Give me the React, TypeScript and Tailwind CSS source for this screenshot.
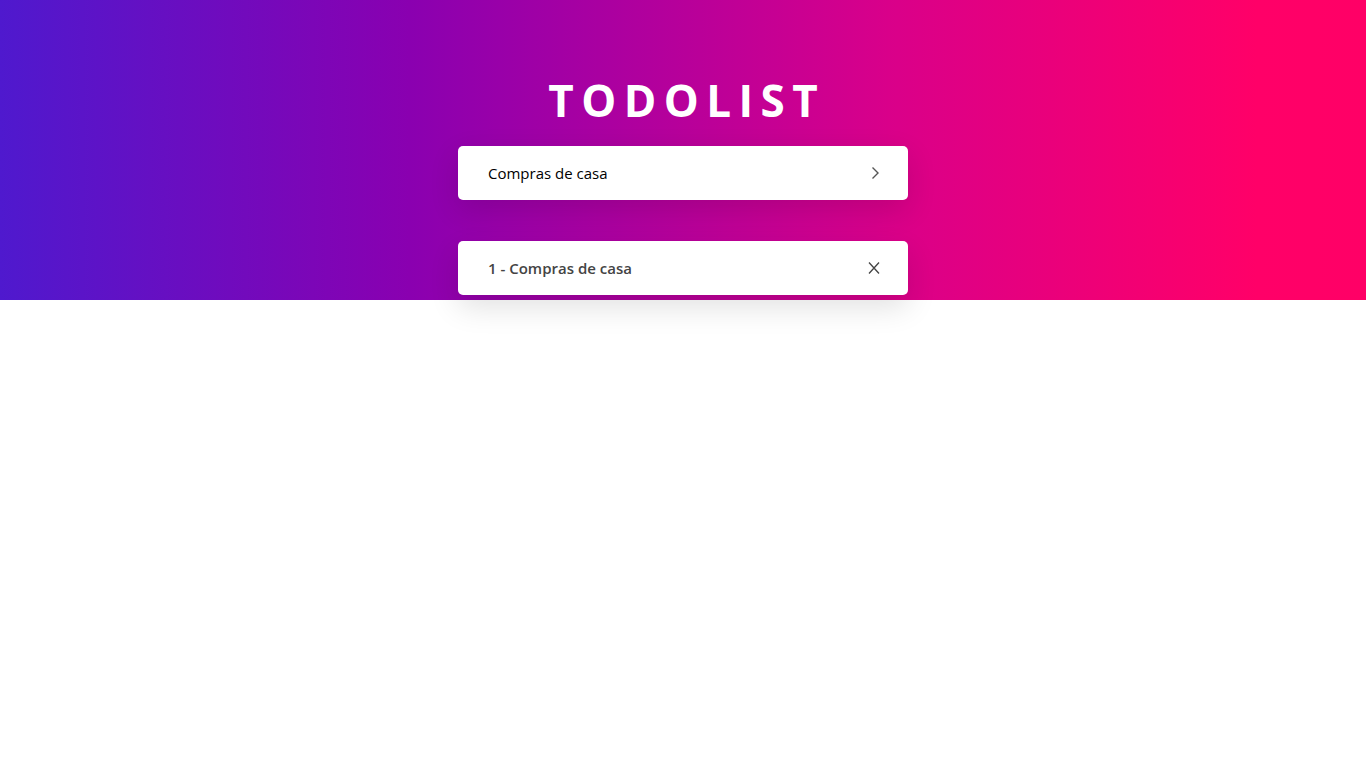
export default function App() {
  return (
    <div className="min-h-screen bg-white font-['Open_Sans','Noto_Sans',sans-serif]">
      <div className="h-[300px] bg-[linear-gradient(to_right,#4f19ce_0%,#8a00b0_30%,#d9008a_65%,#ff0068_92%,#ff0066_100%)]">
        <div className="mx-auto w-[450px] pt-[72px]">
          <h1 className="text-center text-[44px] font-bold leading-[56px] tracking-[0.17em] pl-[0.17em] text-white">
            TODOLIST
          </h1>
          <div className="mt-[18px] flex h-[54px] items-center justify-between rounded-[5px] bg-white pl-[30px] pr-[26px] shadow-[0_10px_30px_rgba(0,0,0,0.12)]">
            <span className="text-[15px] text-black">Compras de casa</span>
            <svg width="14" height="14" viewBox="0 0 14 14" fill="none" stroke="#555" strokeWidth="1.4">
              <path d="M4.5 1.5 L10 7 L4.5 12.5" />
            </svg>
          </div>
          <div className="mt-[41px] flex h-[54px] items-center justify-between rounded-[5px] bg-white pl-[30px] pr-[27px] shadow-[0_12px_30px_rgba(0,0,0,0.12)]">
            <span className="text-[15px] font-semibold text-[#444]">1 - Compras de casa</span>
            <svg width="14" height="14" viewBox="0 0 14 14" fill="none" stroke="#444" strokeWidth="1.3">
              <path d="M2 1.5 L12 12.5 M12 1.5 L2 12.5" />
            </svg>
          </div>
        </div>
      </div>
    </div>
  );
}
